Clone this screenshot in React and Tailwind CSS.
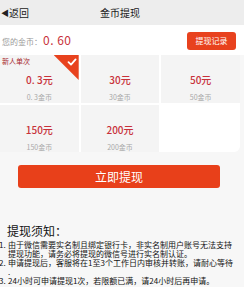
import React from 'react';

const options = [
  { money: '0. 3元', coin: '0. 3金币', tag: '新人单次', active: true },
  { money: '30元', coin: '30金币' },
  { money: '50元', coin: '50金币' },
  { money: '150元', coin: '150金币' },
  { money: '200元', coin: '200金币' },
];

const notes = [
  ['由于微信需要实名制且绑定银行卡，非实名制用户账号无法支持', '提现功能，请务必将提现的微信号进行实名制认证。'],
  ['申请提现后，客服将在1至3个工作日内审核并转账，请耐心等待', '.'],
  ['24小时可申请提现1次，若限额已满，请24小时后再申请。'],
];

export default function App() {
  return (
    <div className="w-[244px] h-[287px] overflow-hidden bg-[#f7f7f7] font-['Noto_Sans_CJK_SC',sans-serif] text-[#222]">
      {/* Header */}
      <div className="relative flex h-[25px] items-center bg-[#ededed]">
        <div className="flex items-center pl-[1px] text-[10px] leading-none text-[#222]">
          <span className="text-[8px]">◀</span>
          <span>返回</span>
        </div>
        <div className="absolute left-[100px] top-0 flex h-full items-center text-[10px] leading-none">
          金币提现
        </div>
      </div>

      {/* Balance */}
      <div className="flex h-[30px] items-center justify-between bg-white pl-[2px] pr-[8px]">
        <div className="flex items-baseline">
          <span className="text-[8px] text-[#9a9a9a]">您的金币：</span>
          <span className="ml-[1px] text-[12px] tracking-[0.5px] text-[#c8313a]">0. 60</span>
        </div>
        <button className="mt-[2px] h-[18px] w-[49px] rounded-[3px] bg-[#e8421e] text-[8px] leading-none text-white">
          提现记录
        </button>
      </div>

      {/* Options */}
      <div className="grid w-[240px] grid-cols-3 grid-rows-[48px_47px] gap-[2px] rounded-br-[6px] bg-white">
        {options.map((o) => (
          <div key={o.money} className="relative flex flex-col items-center bg-[#f4f4f4]">
            {o.tag && (
              <span className="absolute left-[2px] top-[3px] text-[7px] leading-none text-[#a8282e]">
                {o.tag}
              </span>
            )}
            {o.active && (
              <div className="absolute right-0 top-0 h-[25px] w-[25px] bg-[#e8421e] [clip-path:polygon(0_0,100%_0,100%_100%)]">
                <svg className="absolute right-[2px] top-[2px]" width="10" height="10" viewBox="0 0 10 10">
                  <path d="M1.5 5.2 L4 7.6 L8.6 2.4" fill="none" stroke="#fff" strokeWidth="1.8" strokeLinecap="round" strokeLinejoin="round" />
                </svg>
              </div>
            )}
            <span className="mt-[20px] text-[10px] font-medium leading-none text-[#c8313a]">{o.money}</span>
            <span className="mt-[9px] text-[7px] leading-none text-[#a8a8a8]">{o.coin}</span>
          </div>
        ))}
      </div>

      {/* Submit */}
      <button className="ml-[18px] mt-[13px] h-[23px] w-[202px] rounded-[3px] bg-[#e8401a] text-[12px] leading-none text-white">
        立即提现
      </button>

      {/* Notice */}
      <div className="mt-[36px]">
        <div className="pl-[7px] text-[12px] leading-[13px] text-[#111]">提现须知：</div>
        <div className="mt-[3px] flex flex-col text-[8px] leading-[9px] text-[#111]">
          {notes.map((lines, i) => (
            <div key={i} className="flex">
              <span className="-ml-[1px] w-[9px] shrink-0 whitespace-nowrap">{i + 1}.</span>
              <div className="flex flex-col">
                {lines.map((l) => (
                  <span key={l} className="block h-[9px] whitespace-nowrap">{l}</span>
                ))}
              </div>
            </div>
          ))}
        </div>
      </div>
    </div>
  );
}
